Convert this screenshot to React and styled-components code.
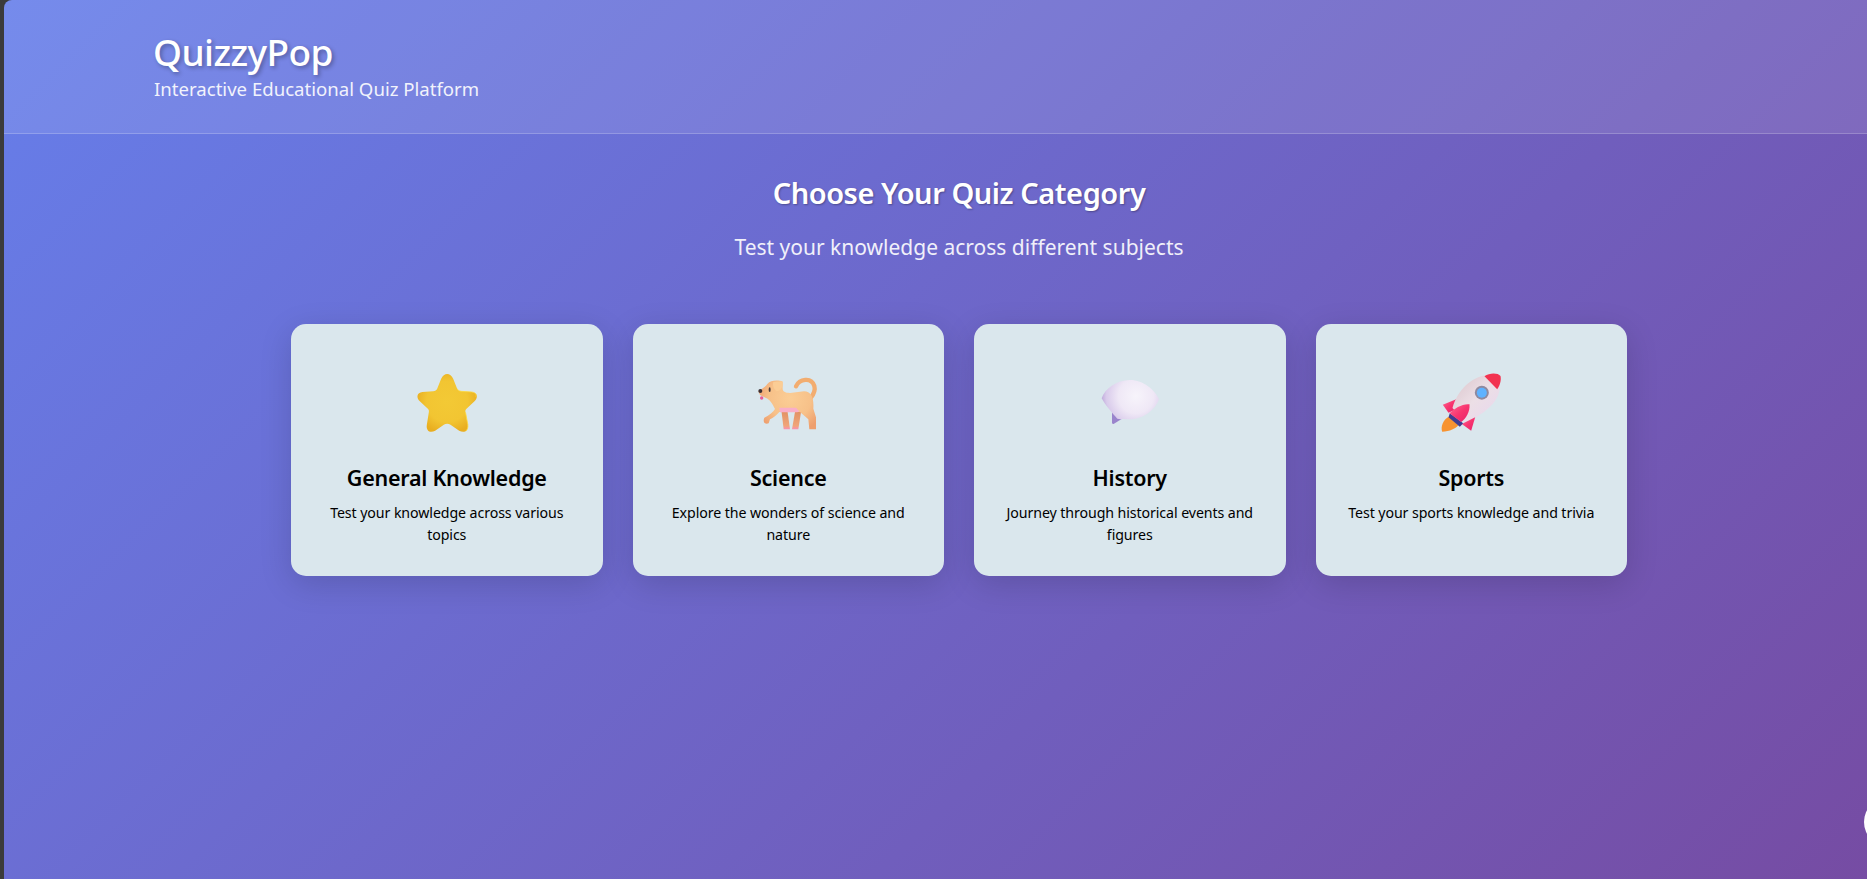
import React from "react";
import styled, { createGlobalStyle } from "styled-components";

const Global = createGlobalStyle`
  html, body { margin: 0; height: 100%; overflow: hidden; background: #3b3b3b; }
  #root { height: 100%; }
  * { box-sizing: border-box; }
`;
const Shell = styled.div`
  width: 1867px; height: 879px; padding-left: 4px; overflow: hidden; position: relative;
  font-family: "Noto Sans", "Open Sans", "Liberation Sans", sans-serif;
`;
const Page = styled.div`
  width: 1910px; height: 879px; border-top-left-radius: 8px; overflow: hidden;
  background: linear-gradient(135deg, #667eea 0%, #764ba2 100%);
  display: flex; flex-direction: column;
`;
const Header = styled.header`
  height: 134px; padding: 27px 150px 0; color: #fff;
  background: rgba(255,255,255,0.1); border-bottom: 1px solid rgba(255,255,255,0.2);
`;
const Logo = styled.h1`
  margin: 0 0 0 -1px; font-size: 37px; line-height: 50px; font-weight: 500; letter-spacing: -0.6px;
  text-shadow: 2px 2px 4px rgba(0,0,0,0.3);
`;
const Tagline = styled.p`
  margin: 1px 0 0; font-size: 18.6px; line-height: 22px; opacity: 0.9;
`;
const Main = styled.main`
  display: flex; flex-direction: column; align-items: center; padding-top: 39px; color: #fff;
`;
const Heading = styled.h2`
  margin: 0; font-size: 29px; line-height: 40px; font-weight: 600; letter-spacing: -0.45px;
  text-shadow: 1px 1px 2px rgba(0,0,0,0.3);
`;
const Sub = styled.p`
  margin: 20px 0 0; font-size: 21px; line-height: 28px; opacity: 0.9;
`;
const Grid = styled.div`
  display: grid; grid-template-columns: repeat(4, 311.5px); gap: 30px; margin-top: 63px;
`;
const Card = styled.article`
  height: 252px; padding: 46px 30px 30px; border-radius: 15px; background: #dae7ed; color: #000;
  text-align: center; box-shadow: 0 8px 32px rgba(0,0,0,0.15);
  display: flex; flex-direction: column; align-items: center;
`;
const Icon = styled.svg` width: 64px; height: 64px; flex: none; display: block; `;
const Title = styled.h3`
  margin: 30px 0 0; font-size: 21.5px; line-height: 28px; font-weight: 600; letter-spacing: -0.25px;
`;
const Desc = styled.p`
  margin: 10px 0 0; font-size: 14.2px; line-height: 22.4px; letter-spacing: -0.09px;
`;
const Bubble = styled.div`
  position: absolute; left: 1864px; top: 798px; width: 48px; height: 48px; border-radius: 50%; background: #fff;
`;

const Star = () => (
  <Icon viewBox="0 0 192 192">
    <defs>
      <radialGradient id="st" gradientUnits="userSpaceOnUse" cx="140" cy="125" r="95">
        <stop offset="0" stopColor="#f3c935" /><stop offset=".65" stopColor="#f2c532" /><stop offset="1" stopColor="#e9ae20" />
      </radialGradient>
    </defs>
    <g transform="translate(-43.5 -30)">
      <path fill="url(#st)" d="M122 56C130 37 150 37 158 56L170 86C172 91 176 93 182 94L214 96C232 98 233 114 222 124L198 146C195 149 194 152 195 157L202 194C204 214 190 220 176 212L150 194C144 190 136 190 130 194L104 212C90 220 76 214 79 194L85 157C86 152 85 149 82 146L58 124C47 114 48 98 66 96L98 94C104 93 108 91 110 86Z" />
      <path fill="none" stroke="#ffd93c" strokeWidth="3" opacity=".8" d="M170 86C172 91 176 93 182 94L214 96C226 98 228 104 226 110M195 157L202 194C203 204 200 210 196 213" />
    </g>
  </Icon>
);

const Dog = () => (
  <Icon viewBox="0 0 192 192">
    <defs>
      <radialGradient id="dg" gradientUnits="userSpaceOnUse" cx="150" cy="115" r="105">
        <stop offset="0" stopColor="#fbcd95" /><stop offset=".6" stopColor="#f7c189" /><stop offset="1" stopColor="#ee9f6e" />
      </radialGradient>
      <linearGradient id="leg" x1="0" y1="0" x2="0" y2="1">
        <stop offset="0" stopColor="#e08f62" /><stop offset=".82" stopColor="#f0a57a" /><stop offset="1" stopColor="#fb8fb4" />
      </linearGradient>
    </defs>
    <g transform="translate(-48 -30)">
      <path fill="none" stroke="#f2ad70" strokeWidth="13" strokeLinecap="round" d="M168 79C178 57 214 50 223 78C227 92 220 104 212 114" />
      <path fill="url(#leg)" d="M124 150H142L150 208H131Z" />
      <path fill="url(#leg)" d="M166 150H184L175 208H156Z" />
      <path fill="url(#dg)" d="M55 93C65 87 75 82 82 72C92 60 115 60 128 65L128 85C128 95 135 99 150 99L192 94C214 95 222 112 220 146L228 172V208H208L205 178L180 156H118C110 165 100 173 90 178L86 190C76 194 67 187 73 173C88 166 100 156 105 147C98 132 88 117 78 114L60 105Z" />
      <path fill="#fbcd95" d="M100 66L127 64C131 78 123 94 110 93C101 87 97 76 100 66Z" />
      <path fill="#f9aec8" d="M118 143H168L178 154L172 157H120Z" />
      <ellipse cx="89" cy="89" rx="3" ry="7" fill="#4b3b3b" />
      <circle cx="61" cy="93" r="6" fill="#3b3035" />
      <ellipse cx="65" cy="114" rx="5" ry="5" fill="#e85c94" />
    </g>
  </Icon>
);

const Speech = () => (
  <Icon viewBox="0 0 192 192">
    <defs>
      <radialGradient id="sb" gradientUnits="userSpaceOnUse" cx="168" cy="108" r="105">
        <stop offset="0" stopColor="#f7f4fb" /><stop offset=".5" stopColor="#efe8f6" /><stop offset=".85" stopColor="#d9cbeb" /><stop offset="1" stopColor="#bda8da" />
      </radialGradient>
    </defs>
    <g transform="translate(-54 -30)">
      <path fill="#9a84cc" d="M96 152V187Q96 194 102 191L126 176Z" />
      <path fill="url(#sb)" d="M65 115C75 85 110 60 150 60C190 60 225 90 237 118C225 150 190 178 150 178C140 178 130 176 122 178L112 176C98 162 74 132 65 115Z" />
    </g>
  </Icon>
);

const Rocket = () => (
  <Icon viewBox="0 0 192 192">
    <defs>
      <linearGradient id="rb" x1="0" y1="0" x2="1" y2="1">
        <stop offset="0" stopColor="#d9c3c9" /><stop offset=".5" stopColor="#ecdfe6" /><stop offset="1" stopColor="#e8d6ee" />
      </linearGradient>
      <linearGradient id="rf" x1="0" y1="0" x2="1" y2="1">
        <stop offset="0" stopColor="#ff6a94" /><stop offset=".5" stopColor="#f8356f" /><stop offset="1" stopColor="#e8206a" />
      </linearGradient>
    </defs>
    <g transform="translate(-43.5 -30)">
      <path fill="url(#rf)" d="M55 134L95 118L90 150L72 158Z" />
      <path fill="url(#rb)" d="M183 46C142 52 98 90 84 144L122 186C178 164 222 128 226 84Z" />
      <path fill="#f23350" d="M180 49C195 38 220 38 228 48C231 62 225 78 218 88Z" />
      <circle cx="172" cy="98" r="21" fill="#8f8a9f" />
      <circle cx="172" cy="98" r="15" fill="#5fb2ff" />
      <path fill="url(#rf)" d="M112 192L152 172L140 212Z" />
      <path fill="#f79330" d="M72 170C55 180 48 200 53 215C75 215 95 205 102 195Z" />
      <path fill="#3f3c90" d="M76 160L116 190L106 200L72 172Z" />
      <path fill="url(#rf)" d="M75 160C90 145 115 130 135 133C137 155 125 175 110 186Z" />
    </g>
  </Icon>
);

const categories = [
  { icon: <Star />, title: "General Knowledge", desc: "Test your knowledge across various topics" },
  { icon: <Dog />, title: "Science", desc: "Explore the wonders of science and nature" },
  { icon: <Speech />, title: "History", desc: "Journey through historical events and figures" },
  { icon: <Rocket />, title: "Sports", desc: "Test your sports knowledge and trivia" },
];

export default function App() {
  return (
    <Shell>
      <Global />
      <Page>
        <Header>
          <Logo>QuizzyPop</Logo>
          <Tagline>Interactive Educational Quiz Platform</Tagline>
        </Header>
        <Main>
          <Heading>Choose Your Quiz Category</Heading>
          <Sub>Test your knowledge across different subjects</Sub>
          <Grid>
            {categories.map((c) => (
              <Card key={c.title}>
                {c.icon}
                <Title>{c.title}</Title>
                <Desc>{c.desc}</Desc>
              </Card>
            ))}
          </Grid>
        </Main>
      </Page>
      <Bubble />
    </Shell>
  );
}
